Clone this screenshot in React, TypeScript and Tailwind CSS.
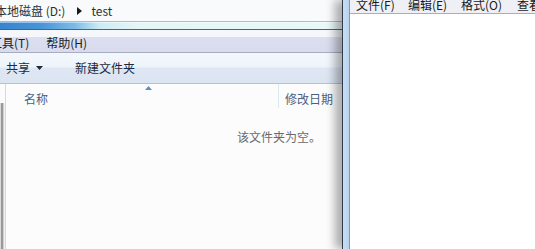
export default function App() {
  return (
    <div className="flex h-[249px] w-[535px] overflow-hidden bg-white font-['Noto_Sans_CJK_SC','Noto_Sans',sans-serif] text-[12px] leading-[12px]">
      {/* Explorer window */}
      <div className="flex w-[342px] shrink-0 flex-col">
        {/* address bar */}
        <div className="flex h-[22px] shrink-0 items-center whitespace-nowrap border-b border-[#b5bac0] bg-[#f8fafc] text-[#303030]">
          <span className="ml-[-5px]">本地磁盘 (D:)</span>
          <svg className="ml-[12px]" width="5" height="8" viewBox="0 0 5 8">
            <path d="M0 0 L5 4 L0 8Z" fill="#1a1a1a" />
          </svg>
          <span className="ml-[9px]">test</span>
        </div>
        {/* progress strip */}
        <div className="h-[8px] shrink-0 border-b border-[#58616b] bg-[linear-gradient(to_right,#3784cf_0%,#4894d8_12%,#7dbce8_22%,#cdebf5_29%,#e4f6f7_40%,#e9f8f8_100%)] shadow-[inset_0_1px_0_rgba(255,255,255,0.45)]" />
        {/* menu bar */}
        <div className="flex h-[23px] shrink-0 items-center whitespace-nowrap border-b border-[#a7adc0] bg-[linear-gradient(to_bottom,#f5f7fb_0px,#f5f7fb_7px,#dcdfef_7px,#d8dbed_100%)] pt-[3px] text-[#1c1c1c]">
          <span className="ml-[-10px]">工具(T)</span>
          <span className="ml-[17px]">帮助(H)</span>
        </div>
        {/* command bar */}
        <div className="flex h-[31px] shrink-0 items-center whitespace-nowrap border-b border-[#aec3dd] bg-[linear-gradient(to_bottom,#f4f8fd_0px,#eef4fb_14px,#dee7f3_15px,#dbe4f1_100%)] text-[#1e2a3a]">
          <span className="ml-[6px]">共享</span>
          <svg className="ml-[6px]" width="7" height="4" viewBox="0 0 7 4">
            <path d="M0 0 L7 0 L3.5 4Z" fill="#1e2a3a" />
          </svg>
          <span className="ml-[32px]">新建文件夹</span>
        </div>
        {/* content */}
        <div className="flex flex-1 bg-[#fcfcfc]">
          <div className="flex w-[6px] shrink-0 flex-col border-r border-[#cddbed]">
            <div className="h-[19px]" />
            <div className="flex flex-1">
              <div className="w-px bg-[#d8d8d8]" />
              <div className="w-[2px] bg-[#9a9a9a]" />
              <div className="w-px bg-[#cfcfcf]" />
              <div className="w-px bg-[#f2f2f2]" />
            </div>
          </div>
          <div className="flex flex-1 flex-col">
            <div className="flex h-[24px] items-start whitespace-nowrap text-[#4b5f80]">
              <span className="ml-[18px] mt-[9px]">名称</span>
              <svg className="ml-[97px] mt-[2px]" width="7" height="4" viewBox="0 0 7 4">
                <path d="M3.5 0 L7 4 L0 4Z" fill="#5f8fbd" />
              </svg>
              <div className="ml-[126px] h-[24px] w-px bg-[#dfe7f1]" />
              <span className="ml-[6px] mt-[9px]">修改日期</span>
            </div>
            <div className="ml-[231px] mt-[23px] whitespace-nowrap text-[#6a6a6a]">该文件夹为空。</div>
          </div>
        </div>
      </div>

      {/* Notepad window */}
      <div className="relative z-10 flex flex-1 shadow-[-7px_0_9px_rgba(0,0,0,0.32)]">
        <div className="w-[8px] shrink-0 border-l border-r border-l-[#2f3b48] border-r-[#7f99b8] bg-[linear-gradient(to_right,#c9def3,#b7d3f0)]" />
        <div className="flex flex-1 flex-col">
          <div className="flex h-[14px] shrink-0 items-center whitespace-nowrap border-b border-[#a9adb5] bg-[#eef0f5] pb-[4px] text-[#1a1a1a]">
            <span className="ml-[6px] w-[52px]">文件(F)</span>
            <span className="w-[53px]">编辑(E)</span>
            <span className="w-[56px]">格式(O)</span>
            <span>查看(V)</span>
          </div>
          <div className="flex-1 bg-white" />
        </div>
      </div>
    </div>
  );
}
